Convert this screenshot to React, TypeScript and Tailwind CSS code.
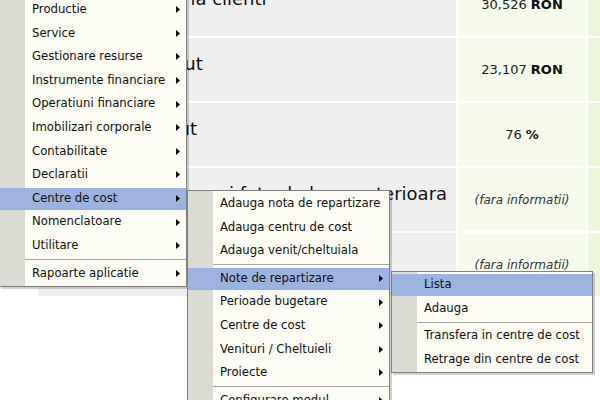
import React from 'react';

type Item = { label: string; arrow?: boolean; active?: boolean } | 'sep';

const rows = [
  { label: 'Incasari de la clienti', value: '30,526', unit: 'RON' },
  { label: 'Rezultat brut', value: '23,107', unit: 'RON' },
  { label: 'Procent brut', value: '76', unit: '%' },
  { label: 'Crestere vanzari fata de luna anterioara', value: null, unit: '' },
  { label: 'Vanzari fata de anul trecut', value: null, unit: '' },
];

const mainMenu: Item[] = [
  { label: 'Productie', arrow: true },
  { label: 'Service', arrow: true },
  { label: 'Gestionare resurse', arrow: true },
  { label: 'Instrumente financiare', arrow: true },
  { label: 'Operatiuni financiare', arrow: true },
  { label: 'Imobilizari corporale', arrow: true },
  { label: 'Contabilitate', arrow: true },
  { label: 'Declaratii', arrow: true },
  { label: 'Centre de cost', arrow: true, active: true },
  { label: 'Nomenclatoare', arrow: true },
  { label: 'Utilitare', arrow: true },
  'sep',
  { label: 'Rapoarte aplicatie', arrow: true },
];

const costMenu: Item[] = [
  { label: 'Adauga nota de repartizare' },
  { label: 'Adauga centru de cost' },
  { label: 'Adauga venit/cheltuiala' },
  'sep',
  { label: 'Note de repartizare', arrow: true, active: true },
  { label: 'Perioade bugetare', arrow: true },
  { label: 'Centre de cost', arrow: true },
  { label: 'Venituri / Cheltuieli', arrow: true },
  { label: 'Proiecte', arrow: true },
  'sep',
  { label: 'Configurare modul', arrow: true },
];

const notesMenu: Item[] = [
  { label: 'Lista', active: true },
  { label: 'Adauga' },
  'sep',
  { label: 'Transfera in centre de cost' },
  { label: 'Retrage din centre de cost' },
];

function Arrow() {
  return (
    <svg width="4" height="7" viewBox="0 0 4 7" className="shrink-0">
      <polygon points="0,0 4,3.5 0,7" fill="#000" />
    </svg>
  );
}

function Menu({ items, className }: { items: Item[]; className: string }) {
  return (
    <div
      className={`absolute border border-[#808080] py-px shadow-[2px_2px_0_rgba(0,0,0,0.18)] bg-[linear-gradient(to_right,#dbdbd3_25px,#fcfcf5_25px)] ${className}`}
    >
      {items.map((it, i) =>
        it === 'sep' ? (
          <div key={i} className="h-[4px] ml-[25px] flex items-center">
            <div className="h-px w-full bg-[#a6a6a0]" />
          </div>
        ) : (
          <div key={i} className="h-[23.6px] flex items-center">
            <div
              className={`h-[22px] w-full flex items-center pl-[32px] pr-[6px] ${
                it.active ? 'bg-[#9bb3de]' : ''
              }`}
            >
              <span className="flex-1 whitespace-nowrap text-[11.7px] text-[#111]">{it.label}</span>
              {it.arrow && <Arrow />}
            </div>
          </div>
        )
      )}
    </div>
  );
}

export default function App() {
  return (
    <div className="relative w-[600px] h-[400px] overflow-hidden bg-white font-['DejaVu_Sans',sans-serif]">
      <div className="ml-[38px] -mt-[27px] grid grid-cols-[418px_128px_60px] gap-[2px]">
        {rows.map((r) => (
          <React.Fragment key={r.label}>
            <div className="h-[63px] bg-[#efefef] pl-[48px] pt-[15px] text-[18px] leading-[22px] text-[#111] whitespace-nowrap">
              {r.label}
            </div>
            <div className="h-[63px] bg-[#f6fbee] flex items-center justify-center text-[#222]">
              {r.value ? (
                <span className="text-[13px]">
                  {r.value} <b className="text-[#111]">{r.unit}</b>
                </span>
              ) : (
                <i className="text-[12px] text-[#333]">(fara informatii)</i>
              )}
            </div>
            <div className="h-[63px] bg-[#ebf6da]" />
          </React.Fragment>
        ))}
      </div>

      <Menu items={mainMenu} className="left-[-1px] top-[-4px] w-[188px]" />
      <Menu items={costMenu} className="left-[187px] top-[190px] w-[203px]" />
      <Menu items={notesMenu} className="left-[391px] top-[271px] w-[202px]" />
    </div>
  );
}
